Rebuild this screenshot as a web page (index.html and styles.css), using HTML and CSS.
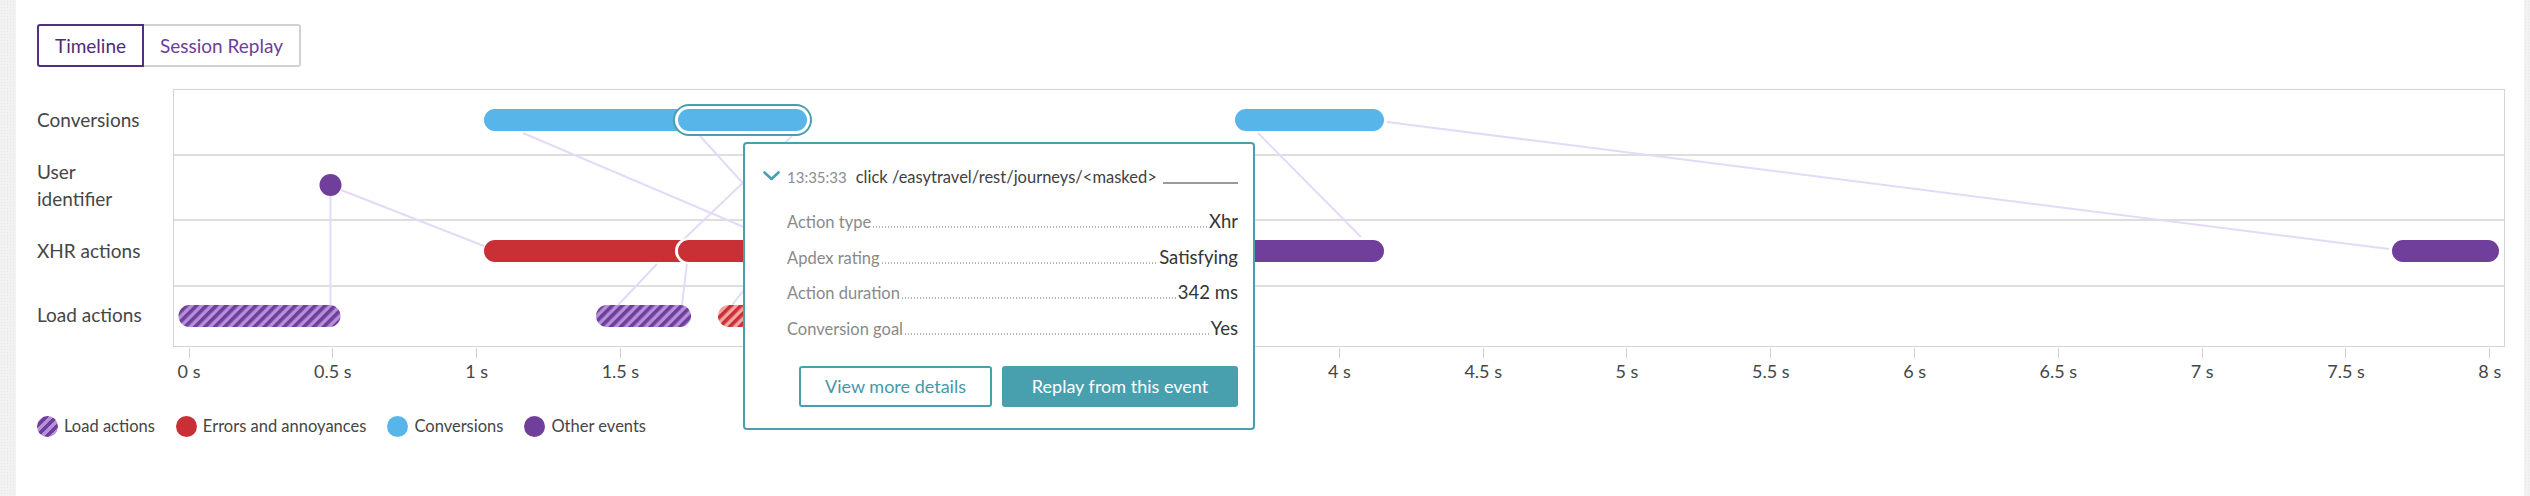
FILE: index.html
```html
<!DOCTYPE html>
<html lang="en">
<head>
<meta charset="utf-8">
<title>Session timeline</title>
<link rel="stylesheet" href="styles.css">
</head>
<body>
<div class="page">
  <div class="gutter gutter-left"></div>
  <main class="content">
    <div class="tabs">
      <button class="tab tab-active">Timeline</button>
      <button class="tab">Session Replay</button>
    </div>

    <div class="timeline">
      <div class="labels">
        <div class="label">Conversions</div>
        <div class="label">User<br>identifier</div>
        <div class="label">XHR actions</div>
        <div class="label label-last">Load actions</div>
      </div>

      <div class="plot">
        <div class="row"></div>
        <div class="row"></div>
        <div class="row"></div>
        <div class="row row-last"></div>

        <svg class="marks" width="2332" height="258" viewBox="0 0 2332 258" xmlns="http://www.w3.org/2000/svg">
          <defs>
            <pattern id="stripe-purple" patternUnits="userSpaceOnUse" width="7" height="7" patternTransform="rotate(45)">
              <rect width="7" height="7" fill="#b491d8"/>
              <rect width="3.6" height="7" fill="#6f3d9b"/>
            </pattern>
            <pattern id="stripe-red" patternUnits="userSpaceOnUse" width="7" height="7" patternTransform="rotate(45)">
              <rect width="7" height="7" fill="#f1a7a5"/>
              <rect width="3.6" height="7" fill="#c9302f"/>
            </pattern>
          </defs>
          <g class="links" stroke="#e4daf8" stroke-width="2" fill="none">
            <line x1="157.5" y1="107" x2="157.5" y2="216"/>
            <line x1="168" y1="101" x2="311" y2="157"/>
            <line x1="350" y1="44" x2="627" y2="162"/>
            <line x1="527" y1="47" x2="587" y2="113"/>
            <line x1="619" y1="47" x2="510" y2="151"/>
            <line x1="484" y1="175" x2="445" y2="216"/>
            <line x1="514" y1="174" x2="509" y2="216"/>
            <line x1="559" y1="216" x2="587" y2="181"/>
            <line x1="1085" y1="44" x2="1188" y2="148"/>
            <line x1="1214" y1="33" x2="2216" y2="160"/>
          </g>
          <!-- Conversions -->
          <rect x="311" y="20" width="205" height="22" rx="11" fill="#58b5ea"/>
          <rect x="500" y="15" width="139" height="32" rx="16" fill="#4a9fae"/>
          <rect x="502" y="17" width="135" height="28" rx="14" fill="#ffffff"/>
          <rect x="505" y="20" width="129" height="22" rx="11" fill="#58b5ea"/>
          <rect x="1062" y="20" width="149" height="22" rx="11" fill="#58b5ea"/>
          <!-- User identifier -->
          <circle cx="157.5" cy="96" r="11" fill="#703e9b"/>
          <!-- XHR actions -->
          <rect x="311" y="151" width="210" height="22" rx="11" fill="#c93035"/>
          <rect x="502" y="149" width="400" height="26" rx="13" fill="#ffffff"/>
          <rect x="505" y="151" width="395" height="22" rx="11" fill="#c93035"/>
          <rect x="1000" y="151" width="211" height="22" rx="11" fill="#703e9b"/>
          <rect x="2219" y="151" width="107" height="22" rx="11" fill="#703e9b"/>
          <!-- Load actions -->
          <rect x="5.5" y="216" width="162" height="22" rx="11" fill="url(#stripe-purple)"/>
          <rect x="423" y="216" width="95" height="22" rx="11" fill="url(#stripe-purple)"/>
          <rect x="545" y="216" width="100" height="22" rx="11" fill="url(#stripe-red)"/>
        </svg>

        <div class="tooltip">
          <div class="tip-head">
            <svg class="chevron" width="17" height="10" viewBox="0 0 17 10" xmlns="http://www.w3.org/2000/svg">
              <path d="M1.5 1.5 L8.5 8 L15.5 1.5" fill="none" stroke="#4a9fae" stroke-width="2.6" stroke-linecap="round" stroke-linejoin="round"/>
            </svg>
            <span class="tip-time">13:35:33</span>
            <span class="tip-name">click /easytravel/rest/journeys/&lt;masked&gt;</span>
            <span class="tip-mask"></span>
          </div>
          <div class="tip-rows">
            <div class="tip-row"><span class="tip-key">Action type</span><span class="tip-dots"></span><span class="tip-val">Xhr</span></div>
            <div class="tip-row"><span class="tip-key">Apdex rating</span><span class="tip-dots"></span><span class="tip-val">Satisfying</span></div>
            <div class="tip-row"><span class="tip-key">Action duration</span><span class="tip-dots"></span><span class="tip-val">342 ms</span></div>
            <div class="tip-row"><span class="tip-key">Conversion goal</span><span class="tip-dots"></span><span class="tip-val">Yes</span></div>
          </div>
          <div class="tip-actions">
            <button class="btn btn-outline">View more details</button>
            <button class="btn btn-primary">Replay from this event</button>
          </div>
        </div>
      </div>

      <div class="axis-spacer"></div>
      <div class="axis">
        <div class="tick"><span class="tick-line"></span><span class="tick-label">0 s</span></div>
        <div class="tick"><span class="tick-line"></span><span class="tick-label">0.5 s</span></div>
        <div class="tick"><span class="tick-line"></span><span class="tick-label">1 s</span></div>
        <div class="tick"><span class="tick-line"></span><span class="tick-label">1.5 s</span></div>
        <div class="tick"><span class="tick-line"></span><span class="tick-label"></span></div>
        <div class="tick"><span class="tick-line"></span><span class="tick-label"></span></div>
        <div class="tick"><span class="tick-line"></span><span class="tick-label"></span></div>
        <div class="tick"><span class="tick-line"></span><span class="tick-label"></span></div>
        <div class="tick"><span class="tick-line"></span><span class="tick-label">4 s</span></div>
        <div class="tick"><span class="tick-line"></span><span class="tick-label">4.5 s</span></div>
        <div class="tick"><span class="tick-line"></span><span class="tick-label">5 s</span></div>
        <div class="tick"><span class="tick-line"></span><span class="tick-label">5.5 s</span></div>
        <div class="tick"><span class="tick-line"></span><span class="tick-label">6 s</span></div>
        <div class="tick"><span class="tick-line"></span><span class="tick-label">6.5 s</span></div>
        <div class="tick"><span class="tick-line"></span><span class="tick-label">7 s</span></div>
        <div class="tick"><span class="tick-line"></span><span class="tick-label">7.5 s</span></div>
        <div class="tick"><span class="tick-line"></span><span class="tick-label">8 s</span></div>
      </div>
    </div>

    <div class="legend">
      <div class="legend-item"><span class="swatch swatch-load"></span>Load actions</div>
      <div class="legend-item"><span class="swatch swatch-error"></span>Errors and annoyances</div>
      <div class="legend-item"><span class="swatch swatch-conv"></span>Conversions</div>
      <div class="legend-item"><span class="swatch swatch-other"></span>Other events</div>
    </div>
  </main>
  <div class="gutter gutter-right"></div>
</div>
</body>
</html>
```

FILE: styles.css
```css
* { box-sizing: border-box; }

html, body {
  margin: 0;
  padding: 0;
  background: #ffffff;
}

body {
  font-family: "Lato", "Liberation Sans", sans-serif;
  color: #454646;
  overflow: hidden;
}

.page {
  display: flex;
  width: 2530px;
  height: 496px;
}

.gutter {
  flex: none;
  background-color: #f2f2f2;
  background-image: radial-gradient(#e6e6e6 0.6px, transparent 0.7px);
  background-size: 3px 3px;
}
.gutter-left { width: 16px; }
.gutter-right { width: 6px; }

.content {
  flex: 1;
  min-width: 0;
  padding: 24px 0 0 21px;
}

/* Tabs */
.tabs {
  display: flex;
  height: 43px;
}
.tab {
  font-family: inherit;
  font-size: 19px;
  color: #6f3d9b;
  background: #ffffff;
  border: 2px solid #d2d2d2;
  border-left: none;
  border-radius: 0 3px 3px 0;
  padding: 0;
  width: 157px;
  height: 43px;
  cursor: pointer;
}
.tab-active {
  width: 107px;
  color: #4f2b7d;
  border: 2px solid #532d80;
  border-radius: 3px 0 0 3px;
}

/* Timeline grid */
.timeline {
  margin-top: 22px;
  display: grid;
  grid-template-columns: 136px 2332px;
  grid-template-rows: 258px 35px;
}

.labels {
  display: flex;
  flex-direction: column;
  margin-top: -2px;
}
.label {
  height: 65.5px;
  display: flex;
  align-items: center;
  font-size: 19px;
  line-height: 27px;
}
.label-last { height: 61px; }

.plot {
  position: relative;
  border: 1px solid #d4d4d4;
  display: flex;
  flex-direction: column;
}
.row {
  height: 65.5px;
  border-bottom: 2px solid #dedede;
}
.row-last {
  flex: 1;
  border-bottom: none;
}

.marks {
  position: absolute;
  left: -1px;
  top: -1px;
}

/* Tooltip */
.tooltip {
  position: absolute;
  left: 569px;
  top: 52px;
  width: 512px;
  height: 288px;
  background: #ffffff;
  border: 2px solid #4a9fae;
  border-radius: 4px;
  padding: 21px 15px 0 18px;
  z-index: 2;
}
.tip-head {
  display: flex;
  align-items: center;
  height: 24px;
}
.chevron { flex: none; margin-right: 7px; margin-top: -2px; }
.tip-time {
  font-size: 15px;
  color: #8d8d8d;
  margin-right: 9px;
}
.tip-name {
  font-size: 16.5px;
  color: #3f3f3f;
  white-space: nowrap;
}
.tip-mask {
  flex: 1;
  align-self: flex-end;
  margin: 0 0 5px 6px;
  border-bottom: 2px solid #9a9a9a;
}

.tip-rows {
  margin-top: 21px;
  padding-left: 24px;
}
.tip-row {
  display: flex;
  align-items: baseline;
  height: 35.7px;
}
.tip-key {
  font-size: 16.5px;
  color: #8a8a8a;
}
.tip-dots {
  flex: 1;
  height: 2px;
  margin: 0 1px;
  background-image: radial-gradient(circle, #b5b5b5 0.8px, transparent 1px);
  background-size: 3px 2px;
  background-repeat: repeat-x;
}
.tip-val {
  font-size: 18.5px;
  color: #353535;
}

.tip-actions {
  display: flex;
  justify-content: flex-end;
  gap: 10px;
  margin-top: 13px;
}
.btn {
  font-family: inherit;
  font-size: 18px;
  height: 41px;
  border-radius: 3px;
  cursor: pointer;
}
.btn-outline {
  width: 193px;
  background: #ffffff;
  color: #4598a8;
  border: 2px solid #4a9fae;
}
.btn-primary {
  width: 236px;
  background: #489fae;
  color: #ffffff;
  border: 2px solid #489fae;
}

/* Axis */
.axis {
  display: flex;
  margin-left: -55.9px;
}
.tick {
  flex: none;
  width: 143.8px;
  display: flex;
  flex-direction: column;
  align-items: center;
}
.tick-line {
  width: 1px;
  height: 10px;
  margin-top: 1px;
  background: #cfcfcf;
}
.tick-label {
  margin-top: 3px;
  font-size: 18px;
  line-height: 20px;
  height: 20px;
  white-space: nowrap;
}

/* Legend */
.legend {
  display: flex;
  gap: 21px;
  margin-top: 33px;
  font-size: 16.5px;
  line-height: 22px;
}
.legend-item {
  display: flex;
  align-items: center;
  gap: 6px;
}
.swatch {
  width: 21px;
  height: 21px;
  border-radius: 50%;
  flex: none;
}
.swatch-load {
  background: repeating-linear-gradient(-45deg, #6f3d9b 0 3.5px, #b491d8 3.5px 7px);
}
.swatch-error { background: #c93035; }
.swatch-conv { background: #58b5ea; }
.swatch-other { background: #703e9b; }
```
